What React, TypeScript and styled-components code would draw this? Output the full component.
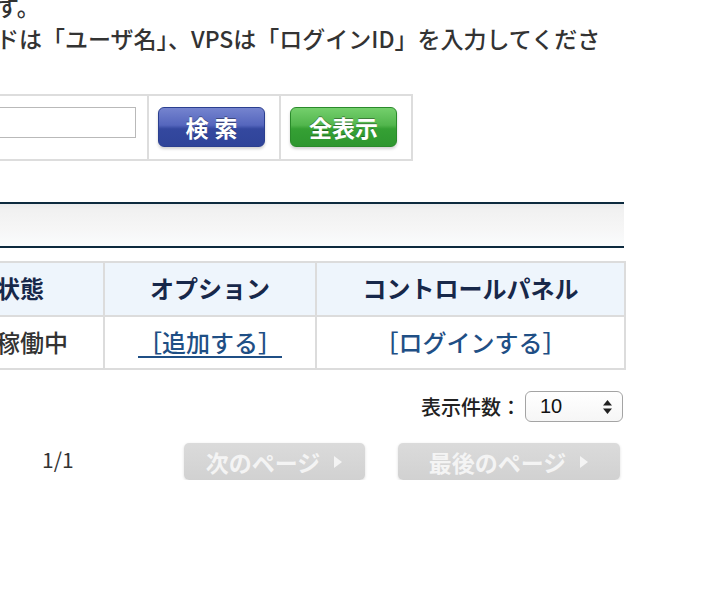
import React from "react";
import styled, { createGlobalStyle } from "styled-components";

const GlobalStyle = createGlobalStyle`
  html, body {
    margin: 0;
    padding: 0;
    background: #ffffff;
    overflow: hidden;
  }
  body {
    font-family: "Noto Sans CJK JP", "Noto Sans", sans-serif;
    color: #333333;
  }
`;

const Page = styled.div`
  width: 900px;
  margin-left: -276px;
  display: flex;
  flex-direction: column;
`;

const Notice = styled.div`
  margin-top: -10px;
  padding-left: 272px;
  font-size: 23px;
  line-height: 32px;
  font-weight: 500;
  color: #333;
`;

const NoticeLine = styled.div`
  white-space: nowrap;
`;

const SearchTable = styled.div`
  margin-top: 40px;
  width: 689px;
  display: grid;
  grid-template-columns: 425px 132px 132px;
  border: 2px solid #dddddd;
  border-left: none;
  box-sizing: border-box;
  height: 67px;
`;

const SearchCell = styled.div<{ $last?: boolean }>`
  display: flex;
  align-items: flex-start;
  padding-top: 11px;
  box-sizing: border-box;
  border-right: ${(p) => (p.$last ? "none" : "2px solid #dddddd")};
`;

const InputCell = styled(SearchCell)`
  justify-content: flex-end;
  padding-right: 11px;
`;

const ButtonCell = styled(SearchCell)`
  padding-left: 9px;
`;

const SearchInput = styled.input`
  width: 300px;
  height: 31px;
  box-sizing: border-box;
  border: 1px solid #b9b9b9;
  background: #fff;
  margin: 0;
  padding: 0 6px;
`;

const ActionButton = styled.button<{ $tone: "blue" | "green"; $w: number }>`
  width: ${(p) => p.$w}px;
  height: 40px;
  border-radius: 6px;
  border: 1px solid ${(p) => (p.$tone === "blue" ? "#2b3f8f" : "#2a8a2b")};
  background: ${(p) =>
    p.$tone === "blue"
      ? "linear-gradient(#7584cf 0%, #5566bd 45%, #34489f 55%, #2f4499 100%)"
      : "linear-gradient(#74cf6c 0%, #52b64d 45%, #35a034 55%, #2e972f 100%)"};
  box-shadow: 0 2px 3px rgba(0, 0, 0, 0.18);
  color: #fff;
  font-family: "Noto Sans CJK JP", sans-serif;
  font-weight: 700;
  font-size: 23px;
  letter-spacing: ${(p) => (p.$tone === "blue" ? "6px" : "0px")};
  text-indent: ${(p) => (p.$tone === "blue" ? "6px" : "0px")};
  text-shadow: 0 -1px 0 rgba(0, 0, 0, 0.35);
  padding: 0;
  line-height: 36px;
  cursor: pointer;
`;

const Bar = styled.div`
  margin-top: 41px;
  height: 46px;
  box-sizing: border-box;
  border-top: 2px solid #0c2a3e;
  border-bottom: 2px solid #0c2a3e;
  background: linear-gradient(#e9eaeb 0%, #f1f1f1 15%, #f6f6f6 60%, #fafcfd 100%);
`;

const DataTable = styled.table`
  margin-top: 13px;
  width: 900px;
  border-collapse: collapse;
  table-layout: fixed;
  font-size: 24px;
`;

const HeadCell = styled.th<{ $align?: "left" | "center" }>`
  height: 54px;
  padding: 0 0 4px 0;
  padding-left: ${(p) => (p.$align === "left" ? "34px" : "0")};
  text-align: ${(p) => p.$align ?? "center"};
  background: #eef5fc;
  border: 2px solid #dcdcdc;
  color: #17284a;
  font-weight: 700;
  box-sizing: border-box;
`;

const BodyCell = styled.td<{ $align?: "left" | "center" }>`
  height: 53px;
  padding: 0 0 2px 0;
  padding-left: ${(p) => (p.$align === "left" ? "34px" : "0")};
  text-align: ${(p) => p.$align ?? "center"};
  border: 2px solid #dcdcdc;
  color: #333;
  font-weight: 500;
  box-sizing: border-box;
`;

const TableLink = styled.a<{ $underline?: boolean }>`
  color: #1f4f85;
  font-weight: 500;
  text-decoration: ${(p) => (p.$underline ? "underline" : "none")};
  text-underline-offset: 4px;
  text-decoration-thickness: 2px;
`;

const PerPageRow = styled.div`
  margin-top: 21px;
  display: flex;
  justify-content: flex-end;
  align-items: center;
  padding-right: 1px;
  gap: 4px;
`;

const PerPageLabel = styled.span`
  font-size: 20px;
  font-weight: 500;
  color: #222;
`;

const SelectBox = styled.div`
  position: relative;
  width: 98px;
  height: 31px;
  box-sizing: border-box;
  border: 1px solid #a4a4a4;
  border-radius: 6px;
  background: linear-gradient(#ffffff, #f6f6f6);
  display: flex;
  align-items: center;
  padding-left: 14px;
  font-family: "Liberation Sans", Arial, sans-serif;
  font-size: 20px;
  color: #111;
`;

const SelectArrows = styled.svg`
  position: absolute;
  right: 9px;
  top: 7px;
`;

const PagerRow = styled.div`
  margin-top: 21px;
  display: flex;
  align-items: center;
  padding-left: 318px;
  gap: 33px;
`;

const PageCount = styled.span`
  flex: 0 0 109px;
  font-size: 21px;
  margin-top: -6px;
  color: #333;
  font-family: "Noto Sans CJK JP", sans-serif;
`;

const PagerButton = styled.button<{ $w: number }>`
  flex: 0 0 ${(p) => p.$w}px;
  height: 37px;
  border: none;
  border-radius: 5px;
  background: linear-gradient(#dbdbdb, #d1d1d1);
  box-shadow: 0 1px 3px rgba(0, 0, 0, 0.14);
  color: #f4f4f4;
  font-family: "Noto Sans CJK JP", sans-serif;
  font-weight: 700;
  font-size: 23px;
  display: flex;
  align-items: center;
  justify-content: center;
  gap: 13px;
  padding: 0;
`;

const Tri = styled.svg`
  display: block;
`;

const Arrow = () => (
  <Tri width="10" height="14" viewBox="0 0 10 14">
    <path d="M1 1 L9 7 L1 13 Z" fill="#f4f4f4" />
  </Tri>
);

export default function App() {
  return (
    <>
      <GlobalStyle />
      <Page>
        <Notice>
          <NoticeLine>す。</NoticeLine>
          <NoticeLine>ドは「ユーザ名」、VPSは「ログインID」を入力してくださ</NoticeLine>
        </Notice>

        <SearchTable>
          <InputCell>
            <SearchInput type="text" />
          </InputCell>
          <ButtonCell>
            <ActionButton $tone="blue" $w={107}>検索</ActionButton>
          </ButtonCell>
          <ButtonCell $last>
            <ActionButton $tone="green" $w={107}>全表示</ActionButton>
          </ButtonCell>
        </SearchTable>

        <Bar />

        <DataTable>
          <colgroup>
            <col style={{ width: 236 }} />
            <col style={{ width: 143 }} />
            <col style={{ width: 212 }} />
            <col style={{ width: 309 }} />
          </colgroup>
          <thead>
            <tr>
              <HeadCell>サーバー名</HeadCell>
              <HeadCell $align="left">状態</HeadCell>
              <HeadCell>オプション</HeadCell>
              <HeadCell>コントロールパネル</HeadCell>
            </tr>
          </thead>
          <tbody>
            <tr>
              <BodyCell>server</BodyCell>
              <BodyCell $align="left">稼働中</BodyCell>
              <BodyCell>
                <TableLink href="#" $underline>［追加する］</TableLink>
              </BodyCell>
              <BodyCell>
                <TableLink href="#">［ログインする］</TableLink>
              </BodyCell>
            </tr>
          </tbody>
        </DataTable>

        <PerPageRow>
          <PerPageLabel>表示件数：</PerPageLabel>
          <SelectBox>
            10
            <SelectArrows width="11" height="16" viewBox="0 0 11 16">
              <path d="M5.5 1 L10 6.5 H1 Z" fill="#222" />
              <path d="M1 9.5 H10 L5.5 15 Z" fill="#222" />
            </SelectArrows>
          </SelectBox>
        </PerPageRow>

        <PagerRow>
          <PageCount>1/1</PageCount>
          <PagerButton $w={181}>
            次のページ
            <Arrow />
          </PagerButton>
          <PagerButton $w={222}>
            最後のページ
            <Arrow />
          </PagerButton>
        </PagerRow>
      </Page>
    </>
  );
}
